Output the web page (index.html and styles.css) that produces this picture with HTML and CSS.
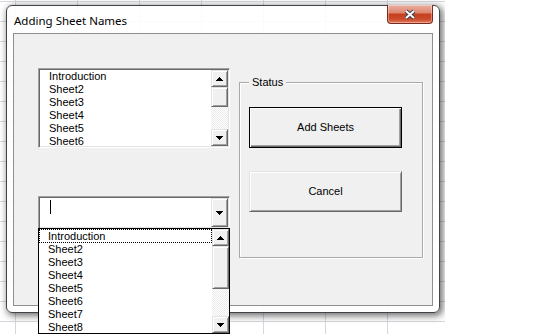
FILE: index.html
```html
<!DOCTYPE html>
<html lang="en">
<head>
  <meta charset="UTF-8">
  <title>Adding Sheet Names</title>
  <link rel="stylesheet" href="styles.css">
</head>
<body>
  <div class="desktop">
    <div class="window">
      <div class="titlebar">
        <span class="title">Adding Sheet Names</span>
        <button type="button" class="close">
          <svg width="14" height="11" viewBox="0 0 14 11">
            <path d="M3 2 L11 9 M11 2 L3 9" stroke="#3b3f4c" stroke-width="4" fill="none"/>
            <path d="M3 2 L11 9 M11 2 L3 9" stroke="#fff" stroke-width="2" fill="none"/>
          </svg>
        </button>
      </div>

      <div class="client">
        <div class="left">
          <div class="listbox">
            <ul class="items">
              <li>Introduction</li>
              <li>Sheet2</li>
              <li>Sheet3</li>
              <li>Sheet4</li>
              <li>Sheet5</li>
              <li>Sheet6</li>
            </ul>
            <div class="scrollbar">
              <div class="sb-btn">
                <svg width="7" height="4" viewBox="0 0 7 4"><path d="M0 4H7V3H6V2H5V1H4V0H3V1H2V2H1V3H0Z"/></svg>
              </div>
              <div class="sb-track"><div class="sb-thumb"></div></div>
              <div class="sb-btn">
                <svg width="7" height="4" viewBox="0 0 7 4"><path d="M0 0H7V1H6V2H5V3H4V4H3V3H2V2H1V1H0Z"/></svg>
              </div>
            </div>
          </div>

          <div class="combo">
            <div class="combo-text"><span class="caret"></span></div>
            <div class="sb-btn combo-btn">
              <svg width="7" height="4" viewBox="0 0 7 4"><path d="M0 0H7V1H6V2H5V3H4V4H3V3H2V2H1V1H0Z"/></svg>
            </div>

            <div class="dropdown">
              <ul class="items">
                <li class="focus">Introduction</li>
                <li>Sheet2</li>
                <li>Sheet3</li>
                <li>Sheet4</li>
                <li>Sheet5</li>
                <li>Sheet6</li>
                <li>Sheet7</li>
                <li>Sheet8</li>
              </ul>
              <div class="scrollbar">
                <div class="sb-btn">
                  <svg width="7" height="4" viewBox="0 0 7 4"><path d="M0 4H7V3H6V2H5V1H4V0H3V1H2V2H1V3H0Z"/></svg>
                </div>
                <div class="sb-track"><div class="sb-thumb long"></div></div>
                <div class="sb-btn">
                  <svg width="7" height="4" viewBox="0 0 7 4"><path d="M0 0H7V1H6V2H5V3H4V4H3V3H2V2H1V1H0Z"/></svg>
                </div>
              </div>
            </div>
          </div>
        </div>

        <div class="groupbox">
          <span class="legend">Status</span>
          <button type="button" class="btn default">Add Sheets</button>
          <button type="button" class="btn">Cancel</button>
        </div>
      </div>
    </div>
  </div>
</body>
</html>
```

FILE: styles.css
```css
body {
  margin: 0;
  background-color: #ffffff;
  font-family: "Liberation Sans", Arial, sans-serif;
  font-size: 11px;
  color: #000;
}

/* planilha do Excel por tras da janela */
.desktop {
  position: relative;
  width: 445px;
  height: 334px;
  overflow: hidden;
  background-color: #ffffff;
  background-image:
    linear-gradient(#d5d8dd 1px, transparent 1px),
    linear-gradient(90deg, #d5d8dd 1px, transparent 1px);
  background-size: 62px 20px;
  background-position: 15px 1px;
}

.window {
  position: absolute;
  left: 6px;
  top: 5px;
  width: 434px;
  height: 308px;
  box-sizing: border-box;
  padding: 0 6px 6px;
  border: 1px solid #404348;
  border-radius: 6px;
  background-color: rgba(255, 255, 255, 0.88);
  box-shadow: 2px 2px 7px 1px rgba(0, 0, 0, 0.55), inset 0 0 0 1px rgba(255, 255, 255, 0.9);
}

.titlebar {
  position: relative;
  height: 27px;
  display: flex;
  align-items: center;
}
.title {
  margin-left: 1px;
  padding-top: 1px;
  font-family: "Noto Sans", sans-serif;
  font-size: 11.5px;
}
.close {
  position: absolute;
  right: 0;
  top: -1px;
  width: 46px;
  height: 19px;
  padding: 0;
  display: flex;
  align-items: center;
  justify-content: center;
  border: 1px solid #7a2a1f;
  border-top: none;
  border-radius: 0 0 4px 4px;
  background: linear-gradient(#eab0a2 0%, #df8872 42%, #c6401f 52%, #cb4a2c 78%, #e37c5a 100%);
  box-shadow: inset 0 0 0 1px rgba(255, 255, 255, 0.35);
}

.client {
  display: flex;
  width: 420px;
  height: 273px;
  box-sizing: border-box;
  padding: 34px 0 0 24px;
  border: 1px solid #8e8f90;
  background-color: #f0f0f0;
}

.left {
  width: 192px;
  display: flex;
  flex-direction: column;
}

.listbox,
.combo {
  display: flex;
  box-sizing: border-box;
  padding: 1px;
  border: 1px solid;
  border-color: #a0a0a0 #ffffff #ffffff #a0a0a0;
  box-shadow: inset 1px 1px #696969, inset -1px -1px #e3e3e3;
  background-color: #ffffff;
}
.listbox {
  height: 80px;
}

.items {
  flex: 1;
  margin: 0;
  padding: 0 0 0 9px;
  list-style: none;
  line-height: 13px;
  overflow: hidden;
  background-color: #ffffff;
}
.items li {
  height: 13px;
  white-space: nowrap;
}

.scrollbar {
  width: 17px;
  display: flex;
  flex-direction: column;
}
.sb-btn {
  flex: none;
  height: 17px;
  display: flex;
  align-items: center;
  justify-content: center;
  box-sizing: border-box;
  border: 1px solid;
  border-color: #e3e3e3 #696969 #696969 #e3e3e3;
  box-shadow: inset 1px 1px #ffffff, inset -1px -1px #a0a0a0;
  background-color: #f0f0f0;
}
.sb-track {
  flex: 1;
  background: repeating-conic-gradient(#ffffff 0 25%, #ebebeb 0 50%) 0 0 / 2px 2px;
}
.sb-thumb {
  height: 20px;
  box-sizing: border-box;
  border: 1px solid;
  border-color: #e3e3e3 #696969 #696969 #e3e3e3;
  box-shadow: inset 1px 1px #ffffff, inset -1px -1px #a0a0a0;
  background-color: #f0f0f0;
}
.sb-thumb.long {
  height: 43px;
}

.combo {
  position: relative;
  margin-top: 48px;
  height: 33px;
}
.combo-text {
  flex: 1;
  padding: 2px 0 0 10px;
}
.caret {
  display: block;
  width: 1px;
  height: 14px;
  background-color: #000;
}
.combo-btn {
  width: 17px;
  height: auto;
}

/* lista aberta do combo, por cima do resto */
.dropdown {
  position: absolute;
  top: 100%;
  left: -1px;
  z-index: 2;
  width: 192px;
  height: 106px;
  box-sizing: border-box;
  display: flex;
  border: 1px solid #000;
  background-color: #ffffff;
}
.dropdown .items {
  padding: 1px 0 0;
}
.dropdown .items li {
  padding-left: 9px;
}
.dropdown .items li.focus {
  height: 14px;
  margin-top: -1px;
  line-height: 15px;
  outline: 1px dotted #000;
  outline-offset: -1px;
}

.groupbox {
  position: relative;
  width: 184px;
  height: 176px;
  margin: 14px 0 0 9px;
  box-sizing: border-box;
  padding: 24px 0 0 9px;
  display: flex;
  flex-direction: column;
  gap: 23px;
  border: 1px solid #a9a9a9;
  box-shadow: 1px 1px #ffffff, inset 1px 1px #ffffff;
}
.legend {
  position: absolute;
  left: 9px;
  top: -7px;
  padding: 0 3px;
  line-height: 13px;
  background-color: #f0f0f0;
}

.btn {
  width: 153px;
  height: 41px;
  padding: 0 0 2px;
  font-family: "Liberation Sans", Arial, sans-serif;
  font-size: 11px;
  color: #000;
  background-color: #f0f0f0;
  border: 1px solid;
  border-color: #e3e3e3 #696969 #696969 #e3e3e3;
  box-shadow: inset 1px 1px #ffffff, inset -1px -1px #a0a0a0;
}
.btn.default {
  border-color: #000;
  box-shadow: inset 1px 1px #ffffff, inset -1px -1px #696969, inset -2px -2px #a0a0a0;
}
```
